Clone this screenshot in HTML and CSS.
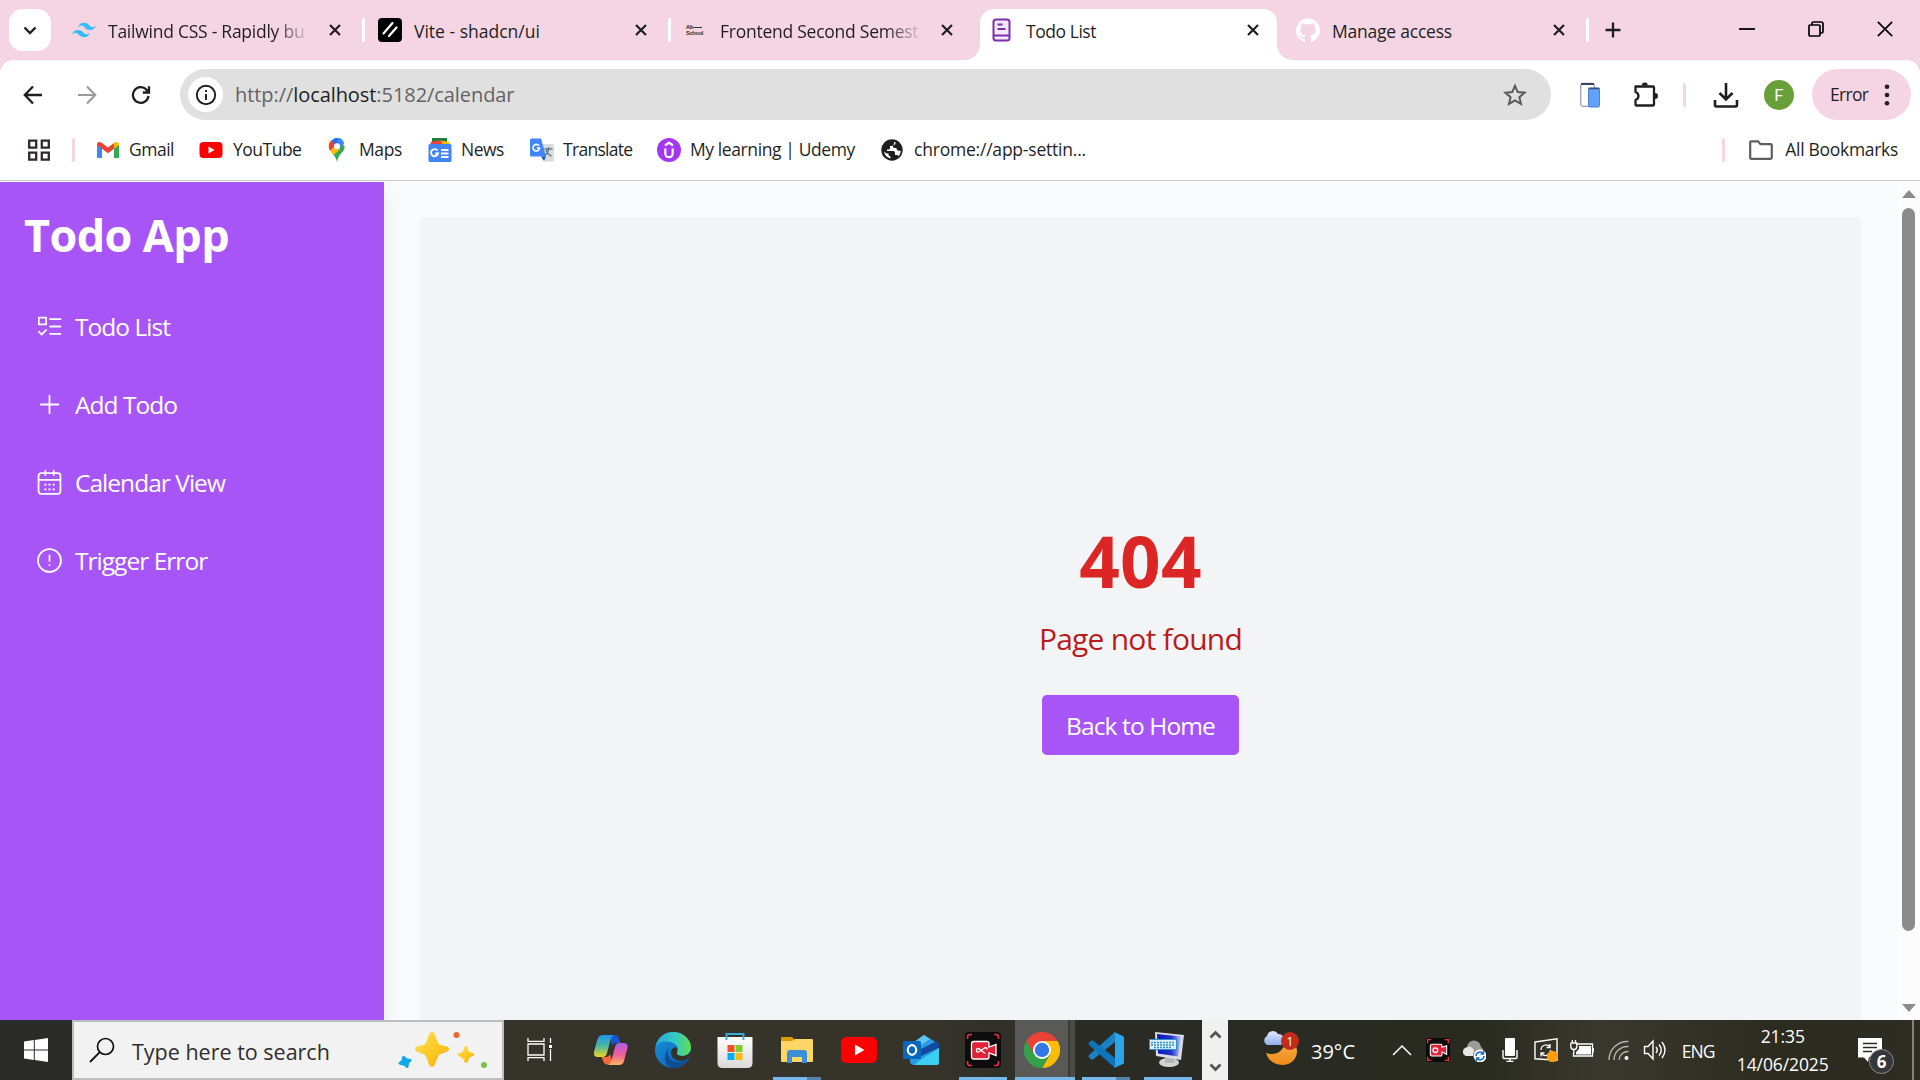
FILE: index.html
```html
<!DOCTYPE html>
<html lang="en">
<head>
<meta charset="utf-8">
<title>Todo List</title>
<link rel="stylesheet" href="styles.css">
</head>
<body>
<div class="screen">
  <header class="tabstrip">
    <button class="tab-search"><svg width="14" height="9" viewBox="0 0 14 9"><path d="M1.500 1.500 7 7l5.500-5.500" class="ln" stroke-width="2.400"/></svg></button>
    <div class="tabs">
      <div class="tab">
        <svg class="fav" width="24" height="24" viewBox="0 0 24 24"><path fill="#38bdf8" d="M12 4.800c-3.200 0-5.200 1.600-6 4.800 1.200-1.600 2.600-2.200 4.200-1.800.913.228 1.565.89 2.288 1.624C13.666 10.618 15.027 12 18 12c3.200 0 5.200-1.600 6-4.800-1.200 1.600-2.600 2.200-4.200 1.800-.913-.228-1.565-.89-2.288-1.624C16.337 6.182 14.976 4.800 12 4.800zm-6 7.200c-3.200 0-5.200 1.600-6 4.800 1.200-1.600 2.600-2.200 4.200-1.800.913.228 1.565.89 2.288 1.624C7.666 17.818 9.027 19.200 12 19.200c3.200 0 5.200-1.600 6-4.800-1.200 1.600-2.600 2.200-4.200 1.800-.913-.228-1.565-.89-2.288-1.624C10.337 13.382 8.976 12 6 12z"/></svg>
        <span class="tab-title fade">Tailwind CSS - Rapidly bu</span>
        <svg class="close" width="12" height="12" viewBox="0 0 12 12"><path d="M1 1l10 10M11 1 1 11" class="ln" stroke-width="2.200"/></svg>
      </div>
      <div class="tab">
        <svg class="fav" width="24" height="24" viewBox="0 0 24 24"><rect width="24" height="24" rx="4" fill="#000"/><path d="M5.500 15.500 14.500 5M11 18l7.500-8.500" stroke="#fff" stroke-width="2.200" stroke-linecap="round"/></svg>
        <span class="tab-title vite">Vite - shadcn/ui</span>
        <svg class="close" width="12" height="12" viewBox="0 0 12 12"><path d="M1 1l10 10M11 1 1 11" class="ln" stroke-width="2.200"/></svg>
      </div>
      <div class="tab">
        <span class="fav alt"><span>Alt<i></i></span><span>School</span></span>
        <span class="tab-title fade">Frontend Second Semest</span>
        <svg class="close" width="12" height="12" viewBox="0 0 12 12"><path d="M1 1l10 10M11 1 1 11" class="ln" stroke-width="2.200"/></svg>
      </div>
      <div class="tab active">
        <svg class="fav" width="24" height="24" viewBox="0 0 24 24" fill="none" stroke="#7b2fb0" stroke-width="2"><rect x="3.500" y="1.500" width="16" height="21" rx="2.500" fill="#f6e8ff"/><path d="M3.500 17.500h16M7.500 6.500h5M7.500 11h8"/></svg>
        <span class="tab-title tight">Todo List</span>
        <svg class="close" width="12" height="12" viewBox="0 0 12 12"><path d="M1 1l10 10M11 1 1 11" class="ln" stroke-width="2.200"/></svg>
      </div>
      <div class="tab">
        <svg class="fav" width="24" height="24" viewBox="0 0 24 24"><path fill="#fff" d="M12 .3a12 12 0 0 0-3.800 23.400c.6.100.8-.3.800-.6v-2c-3.300.7-4-1.600-4-1.600-.6-1.400-1.400-1.800-1.400-1.800-1-.7.100-.7.100-.7 1.200 0 1.900 1.200 1.900 1.200 1 1.800 2.800 1.300 3.500 1 0-.8.400-1.300.7-1.600-2.700-.3-5.500-1.300-5.500-6 0-1.200.5-2.300 1.300-3.100-.2-.4-.6-1.600 0-3.200 0 0 1-.3 3.400 1.200a11.500 11.500 0 0 1 6 0c2.300-1.500 3.300-1.200 3.300-1.200.6 1.600.2 2.800 0 3.200.9.800 1.300 1.900 1.300 3.200 0 4.600-2.800 5.600-5.500 5.900.5.400.9 1 .9 2.200v3.300c0 .3.100.7.800.6A12 12 0 0 0 12 .3"/></svg>
        <span class="tab-title">Manage access</span>
        <svg class="close" width="12" height="12" viewBox="0 0 12 12"><path d="M1 1l10 10M11 1 1 11" class="ln" stroke-width="2.200"/></svg>
      </div>
    </div>
    <svg class="new-tab" width="16" height="16" viewBox="0 0 16 16"><path d="M8 .5v15M.5 8h15" class="ln" stroke-width="2.300"/></svg>
    <div class="window-controls">
      <svg width="16" height="16" viewBox="0 0 16 16"><path d="M0 8h16" stroke="#000" stroke-width="1.800"/></svg>
      <svg width="16" height="16" viewBox="0 0 16 16" fill="none" stroke="#000" stroke-width="1.700"><rect x="1" y="4" width="11" height="11" rx="1"/><path d="M4 4V2.500Q4 1 5.500 1H13q2 0 2 2v7.500q0 1.500-1.500 1.500H12"/></svg>
      <svg width="16" height="16" viewBox="0 0 16 16"><path d="m.8.800 14.400 14.400M15.200.8.800 15.200" stroke="#000" stroke-width="1.700"/></svg>
    </div>
  </header>

  <div class="toolbar">
    <div class="nav-buttons">
      <svg width="20" height="20" viewBox="0 0 20 20"><path d="M19 10H2M10 1.500 1.800 10l8.200 8.500" class="ln" stroke-width="2.300"/></svg>
      <svg width="20" height="20" viewBox="0 0 20 20"><path d="M1 10h17M10 1.500l8.200 8.500-8.200 8.500" class="ln dim" stroke-width="2.200"/></svg>
      <svg width="20" height="20" viewBox="0 0 20 20"><path d="M17.500 11A7.800 7.800 0 1 1 15.500 4.700L17.500 7M18 1.200V7.500h-6.200" class="ln" stroke-width="2.300"/></svg>
    </div>
    <div class="omnibox">
      <span class="site-info"><svg width="22" height="22" viewBox="0 0 22 22"><circle cx="11" cy="11" r="9.200" fill="none" stroke="#1f1f1f" stroke-width="1.900"/><path d="M11 10v6M11 6v2" stroke="#1f1f1f" stroke-width="1.900"/></svg></span>
      <span class="url">http://<b>localhost</b>:5182/calendar</span>
      <svg class="star" width="24" height="24" viewBox="0 0 24 24"><path d="m12 2.800 2.700 6.300 6.900.6-5.200 4.500 1.600 6.700-6-3.600-6 3.600 1.600-6.700L2.400 9.700l6.900-.6z" fill="none" stroke="#5a5a5a" stroke-width="2"/></svg>
    </div>
    <svg class="ic-phone" width="22" height="26" viewBox="0 0 22 26"><rect x="1.800" y="1.300" width="13.500" height="23" rx="2" fill="#fff" stroke="#6d7ea3"/><path d="M2 2h13" stroke="#3b4560" stroke-width="2"/><rect x="9.500" y="6" width="11" height="19" rx="1.500" fill="#62a1fb" stroke="#4a7ed0"/><path d="M9.500 6.500h11" stroke="#33507f" stroke-width="1.500"/></svg>
    <svg class="ic-puzzle" width="26" height="26" viewBox="0 0 26 26"><path d="M2.500 4.500H20q1 0 1 1V22.500q0 1-1 1H3.500q-1 0-1-1V18a4.200 4.200 0 0 0 0-8z" fill="none" stroke="#1f1f1f" stroke-width="2.300" stroke-linejoin="round"/><path d="M8.800 3.500a3 3 0 0 1 6 0zM22 11a3 3 0 0 1 0 6z" fill="#1f1f1f"/></svg>
    <span class="sep toolbar-sep"></span>
    <svg class="ic-download" width="26" height="26" viewBox="0 0 26 26"><path d="M13 1v16M6.500 11l6.500 6.500 6.500-6.500M2 18v5q0 1.500 1.500 1.500h19q1.500 0 1.500-1.500v-5" class="ln" stroke-width="2.600"/></svg>
    <span class="avatar">F</span>
    <div class="error-pill"><span>Error</span><svg width="6" height="22" viewBox="0 0 6 22" fill="#1f1f1f"><circle cx="3" cy="2.800" r="2.300"/><circle cx="3" cy="11" r="2.300"/><circle cx="3" cy="19.200" r="2.300"/></svg></div>
  </div>

  <div class="bookmarks">
    <svg class="apps" width="22" height="22" viewBox="0 0 22 22" fill="none" stroke="#30292e" stroke-width="2.300"><path d="M1.200 1.700h7v7h-7zM13.800 1.700h7v7h-7zM1.200 13.700h7v7h-7zM13.800 13.700h7v7h-7z"/></svg>
    <span class="sep"></span>
    <a class="bm gmail"><svg width="24" height="24" viewBox="0 0 24 24"><path fill="#4285f4" d="M1 6v14h5V10z"/><path fill="#34a853" d="M18 10v10h5V6z"/><path fill="#ea4335" d="M1 6.500C1 3.500 4 3.500 6 5l6 4.500L18 5v5.700l-6 4.500-6-4.500-5-3.800z"/><path fill="#fbbc04" d="M18 5c2-1.500 5-1.500 5 1.500v.4l-5 3.800z"/></svg><span>Gmail</span></a>
    <a class="bm youtube"><svg width="24" height="24" viewBox="0 0 24 24"><rect x=".5" y="4" width="23" height="16" rx="4" fill="#f00"/><path d="M9.500 8.500v7l6-3.500z" fill="#fff"/></svg><span>YouTube</span></a>
    <a class="bm maps"><svg width="18" height="24" viewBox="0 0 18 24"><path fill="#34a853" d="M9 24c-.7-4-2.500-6-5-9L14 5l2.700 3.500C17 14 10.500 15 9 24z"/><path fill="#fbbc04" d="M2.300 13 9 5.500 12.500 11 5.500 17z"/><path fill="#1a73e8" d="M3 3 9 9l5.500-7A8 8 0 0 0 6 .6z"/><path fill="#4285f4" d="M9 .3a8 8 0 0 1 7.300 5L10 12z"/><path fill="#ea4335" d="M3 2.500 8 7l-6 6C0 9 .5 5 3 2.500z"/><circle cx="9" cy="8.300" r="3" fill="#fff"/></svg><span>Maps</span></a>
    <a class="bm news"><svg width="24" height="24" viewBox="0 0 24 24"><path fill="#188038" d="M4 0h15v8H4z"/><path fill="#fbbc04" d="m12 2.500 10 1.500-2 6-9-3z"/><path fill="#ea4335" d="m2.500 4 10-2 3 6H3z"/><rect x=".5" y="6" width="23" height="18" rx="1.500" fill="#4285f4"/><path d="M9.500 12.500a3.600 3.600 0 1 0 .6 3H7M13 12h7.500M13 15.500h7.500M13 19h7.500" fill="none" stroke="#fff" stroke-width="1.800"/></svg><span>News</span></a>
    <a class="bm translate"><svg width="24" height="24" viewBox="0 0 24 24"><path fill="#dadce0" d="M9 6h13.500q1.500 0 1.500 1.500V22q0 1.500-1.500 1.500H14z"/><path fill="#4285f4" d="M1.500.5H11l5 18H1.500Q0 18.500 0 17V2Q0 .5 1.500.5z"/><path fill="#1a56c4" d="M11 18.500h5L14 23z"/><path d="M9 7.800a3.300 3.300 0 1 0 .6 2.200H6.800" fill="none" stroke="#fff" stroke-width="1.600"/><path d="M14.500 11h8M18.500 9v2c0 4-3 6-4 7M16 12c1 3 4 5.500 5.500 6" fill="none" stroke="#607d8b" stroke-width="1.400"/></svg><span>Translate</span></a>
    <a class="bm udemy"><svg width="24" height="24" viewBox="0 0 24 24"><circle cx="12" cy="12" r="12" fill="#a435f0"/><path d="M8.300 10.500v5a3.700 3.700 0 0 0 7.400 0v-5M8 7.500l4-2.800 4 2.800" fill="none" stroke="#fff" stroke-width="2.200"/></svg><span>My learning | Udemy</span></a>
    <a class="bm chrome"><svg width="24" height="24" viewBox="0 0 24 24"><circle cx="12" cy="12" r="10.700" fill="#1f1f1f"/><path fill="#fff" d="M14 4v1.500q0 2.500-2.500 2.500H10v2q0 1.500-1.500 1.500H7V13h6.500q1.500 0 1.500 1.500V17h1.500q1.500 0 2 1.200 2.200-2.400 2.300-5.500h-2.300q-2-.2-2-2.200V10h-2q-1.500 0-1.500-1.500 0-1 1-1.500 1.500-.3 1.500-1.500V4.300zM4 13.500q1 5.800 6.500 7V18.500Q8.500 18 8.500 16.500V15.500H6.500z"/></svg><span>chrome://app-settin...</span></a>
    <span class="sep all-sep"></span>
    <a class="bm all"><svg width="24" height="20" viewBox="0 0 24 20"><path d="M2.500 1.300h6.500l2.500 2.900h10q1.300 0 1.300 1.300v12q0 1.300-1.300 1.300h-19q-1.300 0-1.300-1.300V2.600q0-1.300 1.300-1.300z" fill="none" stroke="#5d5d5d" stroke-width="2.200"/></svg><span>All Bookmarks</span></a>
  </div>

  <div class="page">
    <aside class="sidebar">
      <h1>Todo App</h1>
      <nav>
        <a><svg width="25" height="25" viewBox="0 0 24 24"><path d="M1.800 3.500h7v6.500h-7zM1.800 17l2.700 2.700 4.300-4.500M12.500 5H22.500M12.500 12H22.500M12.500 19H22.500"/></svg><span>Todo List</span></a>
        <a><svg width="25" height="25" viewBox="0 0 24 24"><path d="M3.500 12h17M12 3.500v17"/></svg><span>Add Todo</span></a>
        <a><svg width="25" height="25" viewBox="0 0 24 24"><rect x="1.500" y="3" width="21" height="20" rx="2.500"/><path d="M1.500 9.500h21M8 .5v4.500M16 .5v4.500"/><path d="M7 14h2M11 14h2M15 14h2M7 18.500h2M11 18.500h2M15 18.500h2" stroke-linecap="butt"/></svg><span>Calendar View</span></a>
        <a><svg width="25" height="25" viewBox="0 0 24 24"><circle cx="12" cy="12" r="11"/><path d="M12 7v5.500M12 16.300v.2"/></svg><span>Trigger Error</span></a>
      </nav>
    </aside>
    <main>
      <section class="not-found">
        <h2>404</h2>
        <p>Page not found</p>
        <a class="home">Back to Home</a>
      </section>
    </main>
    <div class="scrollbar"><i class="up"></i><i class="thumb"></i><i class="down"></i></div>
  </div>

  <footer class="taskbar">
    <div class="start"><svg width="24" height="24" viewBox="0 0 24 24" fill="#fff"><path d="M0 3.400 9.800 2v9.500H0zM10.800 1.900 24 0v11.500H10.800zM0 12.500h9.800V22L0 20.600zM10.800 12.500H24V24l-13.200-1.900z"/></svg></div>
    <div class="search">
      <svg width="26" height="26" viewBox="0 0 26 26"><circle cx="16.500" cy="9.500" r="8" fill="none" stroke="#111" stroke-width="1.700"/><path d="M10.800 15.200 1 25" stroke="#111" stroke-width="1.900"/></svg>
      <span>Type here to search</span>
      <svg class="sparkles" width="94" height="42" viewBox="0 0 94 42"><defs><linearGradient id="gold" x1="0" y1="0" x2="1" y2="1"><stop offset="0" stop-color="#ffdf5a"/><stop offset=".55" stop-color="#fdc820"/><stop offset="1" stop-color="#eda91a"/></linearGradient></defs><path fill="url(#gold)" d="M36 3c4 0 4 10 7 12 2 2 10 1.500 10 5s-8 4-10 6c-3 3-3 12-7 12s-4-9-7-12c-2-2-10-2.500-10-6s8-3 10-5c3-2 3-12 7-12z"/><path fill="url(#gold)" d="M70 17c2 0 2 5 3.500 6s5 1 5 2.500-4 2-5 3.500-1.500 5-3.500 5-2-4-3.500-5-5-2-5-3.500 4-1.500 5-2.500 1.500-6 3.500-6z"/><circle cx="60.500" cy="6" r="3" fill="#e8692e"/><circle cx="88" cy="36" r="3" fill="#7cbf45"/><path fill="#0fa8ea" d="M7 27c2-.5 3 2 4.500 2.500S15 29 15.500 31s-2 2-2.500 3.500 0 4-1.500 4.500-2.500-2-4-2.500S3 36 2.500 34.500 5 32.500 5.500 31 5.500 27.500 7 27z"/></svg>
    </div>
    <div class="task-buttons">
      <div class="tb view"><svg width="26" height="26" viewBox="0 0 26 26" fill="none" stroke="#fff" stroke-width="1.300"><path d="M1 7h16v11H1zM1 1v3.300h16V1M1 24v-3.300h16V24M23.500 1v5M23.500 12v12"/><path d="M22 8h3v3h-3z" fill="#fff" stroke="none"/></svg></div>
      <div class="tb"><svg width="36" height="34" viewBox="0 0 36 34"><defs><linearGradient id="cpA" x1="0" y1="0" x2="0" y2="1"><stop offset="0" stop-color="#1f93ee"/><stop offset=".5" stop-color="#4bb9a0"/><stop offset="1" stop-color="#f5d322"/></linearGradient><linearGradient id="cpB" x1="0" y1="0" x2="0" y2="1"><stop offset="0" stop-color="#b060e8"/><stop offset=".5" stop-color="#ee5a9a"/><stop offset="1" stop-color="#fdb463"/></linearGradient></defs><path fill="#1b53d6" d="M17 2h5q3 0 4 4l1.500 4H23q-3 0-4 3z"/><path fill="#f26a3a" d="M8.500 24H13q3 0 4-3l3 10.500h-6q-3 0-4-4z"/><path fill="url(#cpA)" d="M10 2h11q-2.500 1-3.500 5l-3.500 13q-1 4-4.500 4H5q-5 0-4-5L4.500 6Q6 2 10 2z"/><path fill="url(#cpB)" d="M26 32H15q2.500-1 3.500-5L22 14q1-4 4.500-4H30q5.500 0 4.500 5L31 28q-1 4-5 4z"/></svg></div>
      <div class="tb"><svg width="36" height="36" viewBox="0 0 36 36"><defs><linearGradient id="edA" x1="0" x2="1"><stop offset="0" stop-color="#2aa7e0"/><stop offset=".55" stop-color="#35c8c5"/><stop offset="1" stop-color="#62de4e"/></linearGradient><linearGradient id="edB" x1="0" y1="0" x2="1" y2="1"><stop offset="0" stop-color="#1795e2"/><stop offset="1" stop-color="#0c59a4"/></linearGradient></defs><circle cx="18" cy="18" r="18" fill="url(#edB)"/><path fill="url(#edA)" d="M.5 15C3 5 10 0 18 0c11 0 18 8 18 15 0 6-4 9-8.500 9-4 0-6-1.500-5.500-3 2-3 1-8-4-10C10 8 3 10 .5 15z"/><path fill="#0f4d96" d="M14 16c-3 6 0 13 7 14 5 .7 9-1 11.500-3.500C29 33 24 36 18 36 10 35 7 24 14 16z"/><path fill="#34332b" d="M22 21c-.5 1.500 1.500 3 5.500 3 3.200 0 6-1.500 7.500-4l1.500 1.500-3.500 5c-3 2-6 2.800-10 2-5-1-8-6-6.500-10 1-3 4-4 5.500-2.500z"/></svg></div>
      <div class="tb"><svg width="36" height="36" viewBox="0 0 36 36"><defs><linearGradient id="stW" x1="0" y1="0" x2="0" y2="1"><stop offset="0" stop-color="#fff"/><stop offset="1" stop-color="#d9d9d9"/></linearGradient></defs><path fill="url(#stW)" d="M.5 5h35v26q0 5-5 5h-25q-5 0-5-5z"/><path d="M9.500 8V2h17v6" fill="none" stroke="#3aa7d8" stroke-width="2"/><path fill="#f1511b" d="M10.500 13h7v7h-7z"/><path fill="#80cc28" d="M18.500 13h7v7h-7z"/><path fill="#00adef" d="M10.500 21h7v7h-7z"/><path fill="#fbbc09" d="M18.500 21h7v7h-7z"/></svg></div>
      <div class="tb open"><svg width="34" height="30" viewBox="0 0 34 30"><path fill="#d99b0c" d="M1 3q0-1 1-1h10l3 3-1 4H1z"/><path fill="#fdd667" d="M1 6h11l3-2h17q1 0 1 1v21q0 1-1 1H2q-1 0-1-1z"/><path fill="#3b8fd6" d="M7 18q0-3 3-3h14q3 0 3 3v10h-5v-6H12v6H7z"/></svg></div>
      <div class="tb"><svg width="36" height="26" viewBox="0 0 36 26"><rect width="36" height="26" rx="5" fill="#f00"/><path d="M14 7.500v11l9.500-5.500z" fill="#fff"/></svg></div>
      <div class="tb"><svg width="37" height="32" viewBox="0 0 37 32"><path fill="#2a9be0" d="M7 11 21 1l15 9v18q0 3-3 3H11q-4 0-4-4z"/><path fill="#5cc4f2" d="m11 8 10-7 6 4-13 9z"/><path fill="#114a9e" d="m18 15 16-8 2 3v4L18 22z"/><path fill="#3ecdf2" d="M36 14v14q0 3-3 3H12l2-3z"/><rect y="7" width="18" height="18" rx="1.500" fill="#0a67c0"/><ellipse cx="9" cy="16" rx="4.200" ry="4.800" fill="none" stroke="#fff" stroke-width="2.200"/></svg></div>
      <div class="tb running"><svg width="36" height="36" viewBox="0 0 36 36"><rect width="36" height="36" rx="4" fill="#0c0c0d"/><path d="M2.500 7V5q0-2.500 2.500-2.500h2M29 2.500h2q2.500 0 2.500 2.500v2M2.500 29v2q0 2.500 2.500 2.500h2M29 33.500h2q2.500 0 2.500-2.500v-2" fill="none" stroke="#e8323f" stroke-width="1.700"/><path d="M9 9.500h13q2 0 2 2v3.500l7-2.500v11L24 21v4q0 2-2 2H9q-2.500 0-2.500-2.500V12q0-2.500 2.500-2.500z" fill="#e02138" stroke="#fff" stroke-width="1.300"/><path d="M20 21.500l-5.500-4.500q-3-1.500-3 1.300t3 1.200l5-3.500q2.500-1 2.500 1.500" fill="none" stroke="#fff" stroke-width="1.400"/></svg></div>
      <div class="tb current"><svg width="36" height="36" viewBox="0 0 36 36"><path fill="#ea4335" d="M2.400 9A18 18 0 0 1 33.600 9H18l-7.800 13.500z"/><path fill="#fbbc05" d="M33.600 9A18 18 0 0 1 18 36l7.800-13.500L18 9z"/><path fill="#34a048" d="M2.400 9A18 18 0 0 0 18 36l7.800-13.500H10.200z"/><circle cx="18" cy="18" r="9" fill="#fff"/><circle cx="18" cy="18" r="7.200" fill="#3577e5"/></svg></div>
      <div class="tb open code"><svg width="36" height="36" viewBox="0 0 36 36"><path fill="#1b80c4" d="M27 0 1 23l-.5 2L3 27.500h2L27 10z"/><path fill="#1173b8" d="M27 36 1 13l-.5-2L3 8.500h2L27 26z"/><path fill="#2ba4ea" d="m26 0 9 4q1 .5 1 1.500v25q0 1-1 1.500l-9 4q1-1 1-3V3q0-2-1-3z"/></svg></div>
      <div class="tb running kb"><svg width="36" height="36" viewBox="0 0 36 36"><defs><linearGradient id="scr" x1="0" x2="1"><stop offset="0" stop-color="#0a17b8"/><stop offset=".6" stop-color="#2433c9"/><stop offset="1" stop-color="#b9c4ff"/></linearGradient></defs><ellipse cx="20" cy="30.500" rx="10" ry="4.500" fill="#d4d4d4"/><path d="M16 23h9l1 8h-10z" fill="#b5b5b5"/><path fill="#d9dce4" d="m6 0 29 3-3 25-25-4z"/><path fill="url(#scr)" d="m8 2 24 2.500-3 20L9 21.500z"/><rect x=".5" y="7.500" width="27" height="10" fill="#dff0fb" stroke="#2b8fd0"/><path d="M2 10.500h24M2 13h24M5 15.500h17" stroke="#2b8fd0" stroke-width="1.300" stroke-dasharray="2 1"/></svg></div>
    </div>
    <div class="scroller"><svg width="13" height="9" viewBox="0 0 13 9"><path d="m1.500 7.500 5-5 5 5" fill="none" stroke="#555" stroke-width="2.800"/></svg><svg width="13" height="9" viewBox="0 0 13 9"><path d="m1.500 1.500 5 5 5-5" fill="none" stroke="#555" stroke-width="2.800"/></svg></div>
    <div class="weather">
      <svg width="38" height="36" viewBox="0 0 38 36"><defs><linearGradient id="moon" x1="0" y1="0" x2="0" y2="1"><stop offset="0" stop-color="#f7b041"/><stop offset="1" stop-color="#f08a1c"/></linearGradient><linearGradient id="cloud" x1="0" y1="0" x2="0" y2="1"><stop offset="0" stop-color="#e0e9fb"/><stop offset="1" stop-color="#8fb0ec"/></linearGradient></defs><path fill="url(#moon)" d="M4 22c9 3 18-1 19-12h4c5 1 8 5 8 10 0 8-6 14-15 14-8 0-14-5-16-12z"/><path fill="url(#cloud)" d="M5 14a5 5 0 0 1 0-9 6 6 0 0 1 11-2 6 6 0 0 1 6 5q0 6-4 6z"/><circle cx="28" cy="10" r="9" fill="#c42b1c"/><text x="28" y="14.500" text-anchor="middle" class="badge-text">1</text></svg>
      <span>39°C</span>
    </div>
    <div class="tray">
      <svg viewBox="0 0 24 24"><path d="m3 17 9-9 9 9" fill="none" stroke="#fff" stroke-width="1.500"/></svg>
      <svg viewBox="0 0 36 36"><rect width="36" height="36" rx="4" fill="#0c0c0d"/><path d="M2.500 8V2.500H8M28 2.500h5.500V8M2.500 28v5.500H8M28 33.500h5.500V28" fill="none" stroke="#e8323f" stroke-width="2"/><path d="M9 9.500h13q2 0 2 2v2.500l7-2.500v13L24 21v4q0 2-2 2H9q-2.500 0-2.500-2.500V12q0-2.500 2.500-2.500z" fill="#e02138" stroke="#fff" stroke-width="1.600"/><circle cx="14" cy="18.300" r="3.500" fill="none" stroke="#fff" stroke-width="2"/></svg>
      <svg viewBox="0 0 24 24"><path fill="#9b9b98" d="M5 10a7 7 0 0 1 14-1 5 5 0 0 1 2 6H8z"/><path fill="#e6e6e4" d="M4 18a4.500 4.500 0 0 1 0-8.500Q9 7 12 12l-1 6z"/><circle cx="18" cy="18" r="6.500" fill="#fff"/><path d="M14 18a4 4 0 0 1 7.200-2.300M22 18a4 4 0 0 1-7.200 2.300M21.500 13v3h-3M14.500 23v-3h3" fill="none" stroke="#1b6fbd" stroke-width="1.500"/></svg>
      <svg viewBox="0 0 24 24"><rect x="7" y="0" width="10" height="18" rx="1" fill="#fff"/><path d="M5 12v7.500q0 1 1 1h12q1 0 1-1V12M12 20.500V23.500M8.500 23.500h7" fill="none" stroke="#fff" stroke-width="1.400"/></svg>
      <svg viewBox="0 0 24 24"><path d="M1 4 23 .8v21.400L1 20.800z" fill="none" stroke="#fff" stroke-width="1.400"/><path d="M7 12a5 5 0 0 1 9-3M16 6v3.500h-3.500M16.500 12a5 5 0 0 1-9 3.500M7 18.500V15h3.500" fill="none" stroke="#fff" stroke-width="1.300"/><circle cx="18.500" cy="18.500" r="5.700" fill="#ff9d0a"/></svg>
      <svg viewBox="0 0 24 24"><path d="M6 6h16.500v12H3.500v-3" fill="none" stroke="#fff" stroke-width="1.300"/><path fill="#fff" d="M9 8h12v8.500H6V14l3-3zM22.500 10H24v4.500h-1.500z"/><path d="M.8 5v3.500q0 3 3 3t3-3V5H.8M2.300 5V2M5.500 5V2M3.800 11.500v4" fill="none" stroke="#fff" stroke-width="1.300"/></svg>
      <svg viewBox="0 0 24 24" fill="none" stroke="#b5b5ae" stroke-width="1.400"><path d="M2 22A18.500 18.500 0 0 1 21.500 3.500M7 22A13.500 13.500 0 0 1 21.500 8.500M12 22a9 9 0 0 1 9.500-8.500"/><circle cx="19.500" cy="20" r="2" fill="#fff" stroke="none"/></svg>
      <svg viewBox="0 0 24 24" fill="none" stroke="#fff" stroke-width="1.400"><path d="M1.500 8.500H5L10 3v18l-5-5.500H1.500zM13 9q2.500 3 0 6M16 6.500q4.500 5.500 0 11M19 4q6 8 0 16"/></svg>
      <span class="lang">ENG</span>
    </div>
    <div class="clock"><span>21:35</span><span>14/06/2025</span></div>
    <div class="notify"><svg width="36" height="36" viewBox="0 0 36 36"><path fill="#fff" d="M0 0h24v19H11l-1 5-4-4.500H0z"/><path d="M5 5.500h14M5 9.500h14M5 13.500h9" stroke="#2c2b22" stroke-width="1.500"/><circle cx="23.500" cy="23.500" r="12" fill="#34363a" stroke="#8a8a86"/><text x="23.500" y="29.500" text-anchor="middle" class="count">6</text></svg></div>
    <i class="peek"></i>
  </footer>
</div>
</body>
</html>
```
FILE: styles.css
```css
* { box-sizing: border-box; }

body {
  margin: 0;
  font-family: "Open Sans", "Noto Sans", sans-serif;
  font-size: 17.5px;
  color: #1f1f1f;
}

h1, h2, p { margin: 0; }
svg { display: block; flex: none; }
button { border: 0; padding: 0; }

.screen {
  width: 1920px;
  height: 1080px;
  display: flex;
  flex-direction: column;
  overflow: hidden;
  background: #f5d5e4;
}

.ln { fill: none; stroke: #1f1f1f; }
.ln.dim { stroke: #9c9c9c; }
.sep { width: 3px; height: 24px; border-radius: 2px; background: #f5d5e4; flex: none; }

/* Tab strip */
.tabstrip { height: 60px; display: flex; align-items: flex-start; flex: none; }

.tab-search {
  margin: 9px 6px 0 9px;
  width: 42px;
  height: 42px;
  border-radius: 14px;
  background: #fff;
  display: grid;
  place-items: center;
}

.tabs { display: flex; }

.tab {
  position: relative;
  width: 306px;
  height: 60px;
  display: flex;
  align-items: center;
  padding: 0 0 0 15px;
}
.tab::after {
  content: "";
  position: absolute;
  right: -2px;
  top: 18px;
  width: 3px;
  height: 24px;
  border-radius: 2px;
  background: #fff;
}
.tab:nth-child(3)::after, .tab.active::after { display: none; }

.tab-title {
  width: 203px;
  margin: 2px 18px 0 12px;
  flex: none;
  white-space: nowrap;
  letter-spacing: -0.22px;
}
.tab-title.vite { letter-spacing: 0; }
.tab-title.tight { letter-spacing: -0.45px; }
.tab-title.fade {
  letter-spacing: -0.25px;
  -webkit-mask-image: linear-gradient(to right, #000 82%, transparent 100%);
  mask-image: linear-gradient(to right, #000 82%, transparent 100%);
}

.alt {
  width: 24px;
  display: flex;
  flex-direction: column;
  align-items: flex-start;
  padding-left: 2px;
  font: bold 5.5px/6px "Liberation Sans", sans-serif;
  letter-spacing: -0.2px;
  flex: none;
}
.alt span { display: flex; align-items: center; }
.alt i { width: 9px; height: 1px; background: #333; }

/* Active tab: white body with flared feet at the base */
.tab.active { isolation: isolate; }
.tab.active::before {
  content: "";
  position: absolute;
  z-index: -1;
  left: 5px;
  right: 4px;
  top: 9px;
  bottom: 0;
  border-radius: 14px 14px 0 0;
  background: #fff;
}
.tab.active::after {
  display: block;
  z-index: -1;
  left: -10px;
  right: -11px;
  top: 45px;
  width: auto;
  height: 15px;
  border-radius: 0;
  background:
    radial-gradient(circle at 0 0, transparent 14.5px, #fff 15px) left / 15px 15px no-repeat,
    radial-gradient(circle at 100% 0, transparent 14.5px, #fff 15px) right / 15px 15px no-repeat;
}

.new-tab { margin: 22px 0 0 18px; }

.window-controls { margin-left: auto; padding: 21px 27px 0 0; display: flex; gap: 53px; }

/* Toolbar */
.toolbar {
  height: 70px;
  flex: none;
  display: flex;
  align-items: center;
  padding: 0 9px 0 23px;
  background: #fff;
  border-radius: 14px 14px 0 0;
}
.nav-buttons { display: flex; gap: 34px; width: 157px; }

.omnibox {
  width: 1371px;
  height: 51px;
  margin-top: -1px;
  border-radius: 26px;
  background: #e0e0e0;
  display: flex;
  align-items: center;
  padding: 0 24px 0 8px;
}
.site-info {
  width: 35px;
  height: 35px;
  border-radius: 50%;
  background: #fff;
  display: grid;
  place-items: center;
}
.url {
  margin: -1px auto 0 12px;
  font-size: 20px;
  letter-spacing: -0.07px;
  color: #636363;
}
.url b { font-weight: 400; color: #1f1f1f; }

.ic-phone { margin-left: 28px; }
.ic-puzzle { margin-left: 32px; }
.toolbar-sep { margin-left: 24px; }
.ic-download { margin-left: 27px; }

.avatar {
  width: 30px;
  height: 30px;
  margin-left: 25px;
  border-radius: 50%;
  background: #689f38;
  color: #fff;
  font: 17px/30px Roboto, sans-serif;
  text-align: center;
}

.error-pill {
  width: 99px;
  height: 51px;
  margin: -1px 0 0 auto;
  border-radius: 26px;
  background: #f5d5e4;
  display: flex;
  align-items: center;
  justify-content: space-between;
  padding: 0 21px 0 18px;
  letter-spacing: -0.7px;
}
.error-pill span { margin-top: -1px; }

/* Bookmarks bar */
.bookmarks {
  height: 51px;
  flex: none;
  display: flex;
  align-items: center;
  padding: 0 22px 10px 28px;
  background: #fff;
  border-bottom: 1px solid #cbcbcf;
}
.apps { margin-right: 22px; }
.bm { display: flex; align-items: center; white-space: nowrap; letter-spacing: -0.5px; }
.bm span { margin: -2px 0 0 9px; flex: none; }
.gmail { width: 103px; margin-left: 21px; }
.youtube { width: 129px; }
.youtube span { letter-spacing: -0.5px; margin-left: 10px; }
.maps { width: 100px; }
.maps span { margin-left: 13px; letter-spacing: -0.4px; }
.news { width: 102px; }
.translate { width: 127px; }
.translate span { letter-spacing: -0.7px; }
.udemy { width: 223px; letter-spacing: -0.4px; }
.chrome { letter-spacing: -0.21px; }
.chrome span { margin-left: 10px; }
.all-sep { margin-left: auto; }
.all { margin-left: 24px; letter-spacing: -0.3px; }
.all span { margin-left: 12px; }

/* Application */
.page { height: 839px; flex: none; display: flex; background: #f9fafb; border-top: 1px solid #fff; }

.sidebar {
  width: 384px;
  padding: 23px 24px 0;
  background: #a855f7;
  color: #fff;
  box-shadow: 0 12px 19px rgba(0, 0, 0, .08);
}
.sidebar h1 { font-size: 45px; line-height: 60px; letter-spacing: -0.62px; }
.sidebar nav { margin-top: 22px; display: flex; flex-direction: column; }
.sidebar a {
  height: 78px;
  display: flex;
  align-items: center;
  gap: 13px;
  padding-left: 13px;
  font-size: 24.5px;
  letter-spacing: -0.97px;
}
.sidebar a span { margin-top: 1px; }
.sidebar svg { fill: none; stroke: #fff; stroke-width: 1.7; stroke-linecap: round; stroke-linejoin: round; overflow: visible; }

main { flex: 1; padding: 36px 36px 0; }
.not-found {
  height: 100%;
  padding-top: 297px;
  background: #f3f4f6;
  display: flex;
  flex-direction: column;
  align-items: center;
}
.not-found h2 { font-size: 71px; line-height: 92px; letter-spacing: 0.3px; color: #dc2626; }
.not-found p { margin-top: 12px; font-size: 30px; line-height: 40px; letter-spacing: -0.76px; color: #b91c1c; }
.home {
  width: 197px;
  height: 60px;
  margin-top: 36px;
  border-radius: 5px;
  background: #a855f7;
  color: #fff;
  font-size: 24.5px;
  line-height: 61px;
  letter-spacing: -0.88px;
  text-align: center;
}

.scrollbar {
  width: 23px;
  background: #fcfcfc;
  display: flex;
  flex-direction: column;
  align-items: center;
  padding-top: 8px;
}
.scrollbar .up { border: 7.5px solid transparent; border-top: 0; border-bottom: 8px solid #8b8b8b; }
.scrollbar .thumb { width: 13px; height: 723px; margin-top: 10px; border-radius: 7px; background: #8b8b8b; }
.scrollbar .down { margin-top: 73px; border: 7.5px solid transparent; border-bottom: 0; border-top: 8px solid #8b8b8b; }

/* Taskbar */
.taskbar {
  height: 60px;
  flex: none;
  display: flex;
  background: linear-gradient(to right, #2b2b29 0, #2b2b29 72px, #35332a 504px, #35332a 940px, #2a2b25 1100px, #292b20 1480px, #3a382e 1600px, #2c2b20 1780px, #2e2d23 100%);
  color: #fff;
}
.start { width: 72px; display: grid; place-items: center; }

.search {
  width: 432px;
  display: flex;
  align-items: center;
  padding-left: 15px;
  background: #f2f2f2;
  border: 2px solid #bdbdbd;
  color: #2e2e2e;
  font-size: 21.5px;
}
.search span { width: 264px; margin: 2px 0 0 17px; }

.task-buttons { display: flex; }
.tb { position: relative; width: 62px; display: grid; place-items: center; }
.tb.view { width: 72px; margin-right: 4px; }
.tb.running::after, .tb.open::after, .tb.current::after {
  content: "";
  position: absolute;
  left: 7px;
  bottom: 0;
  width: 48px;
  height: 3px;
  background: #76b9ed;
}
.tb.open::after { background: linear-gradient(to right, #76b9ed 70%, #5484a8 70%); }
.tb.current {
  width: 60px;
  margin-left: 1px;
  padding-right: 6px;
  background: linear-gradient(to right, #595a57 53px, #393a36 53px, #393a36 55px, #4b4c48 55px);
}
.tb.current::after { left: 0; width: 60px; }
.tb.code { width: 62px; }
.tb.kb { width: 65px; padding-right: 6px; }

.scroller {
  width: 26px;
  background: #f0f0f0;
  display: flex;
  flex-direction: column;
  align-items: center;
  justify-content: space-between;
  padding: 10px 0 8px;
}

.weather { width: 160px; display: flex; align-items: center; padding: 0 0 2px 34px; }
.weather span { margin: 4px 0 0 11px; font-size: 20px; }
.badge-text { font-size: 12px; fill: #fff; }

.tray { display: flex; align-items: center; gap: 12.1px; padding-left: 2px; }
.tray svg { width: 24px; height: 24px; }
.lang { width: 36px; letter-spacing: -0.9px; margin-top: 1px; margin-left: 3px; }

.clock {
  width: 104px;
  margin-left: 13px;
  display: flex;
  flex-direction: column;
  align-items: center;
  padding-top: 2px;
  line-height: 28px;
  letter-spacing: -0.1px;
}
.notify { margin: 18px 0 0 23px; }
.count { font-size: 17px; font-weight: 700; fill: #fff; }
.peek { margin-left: auto; margin-right: 6px; width: 2px; background: #85857e; }
```
